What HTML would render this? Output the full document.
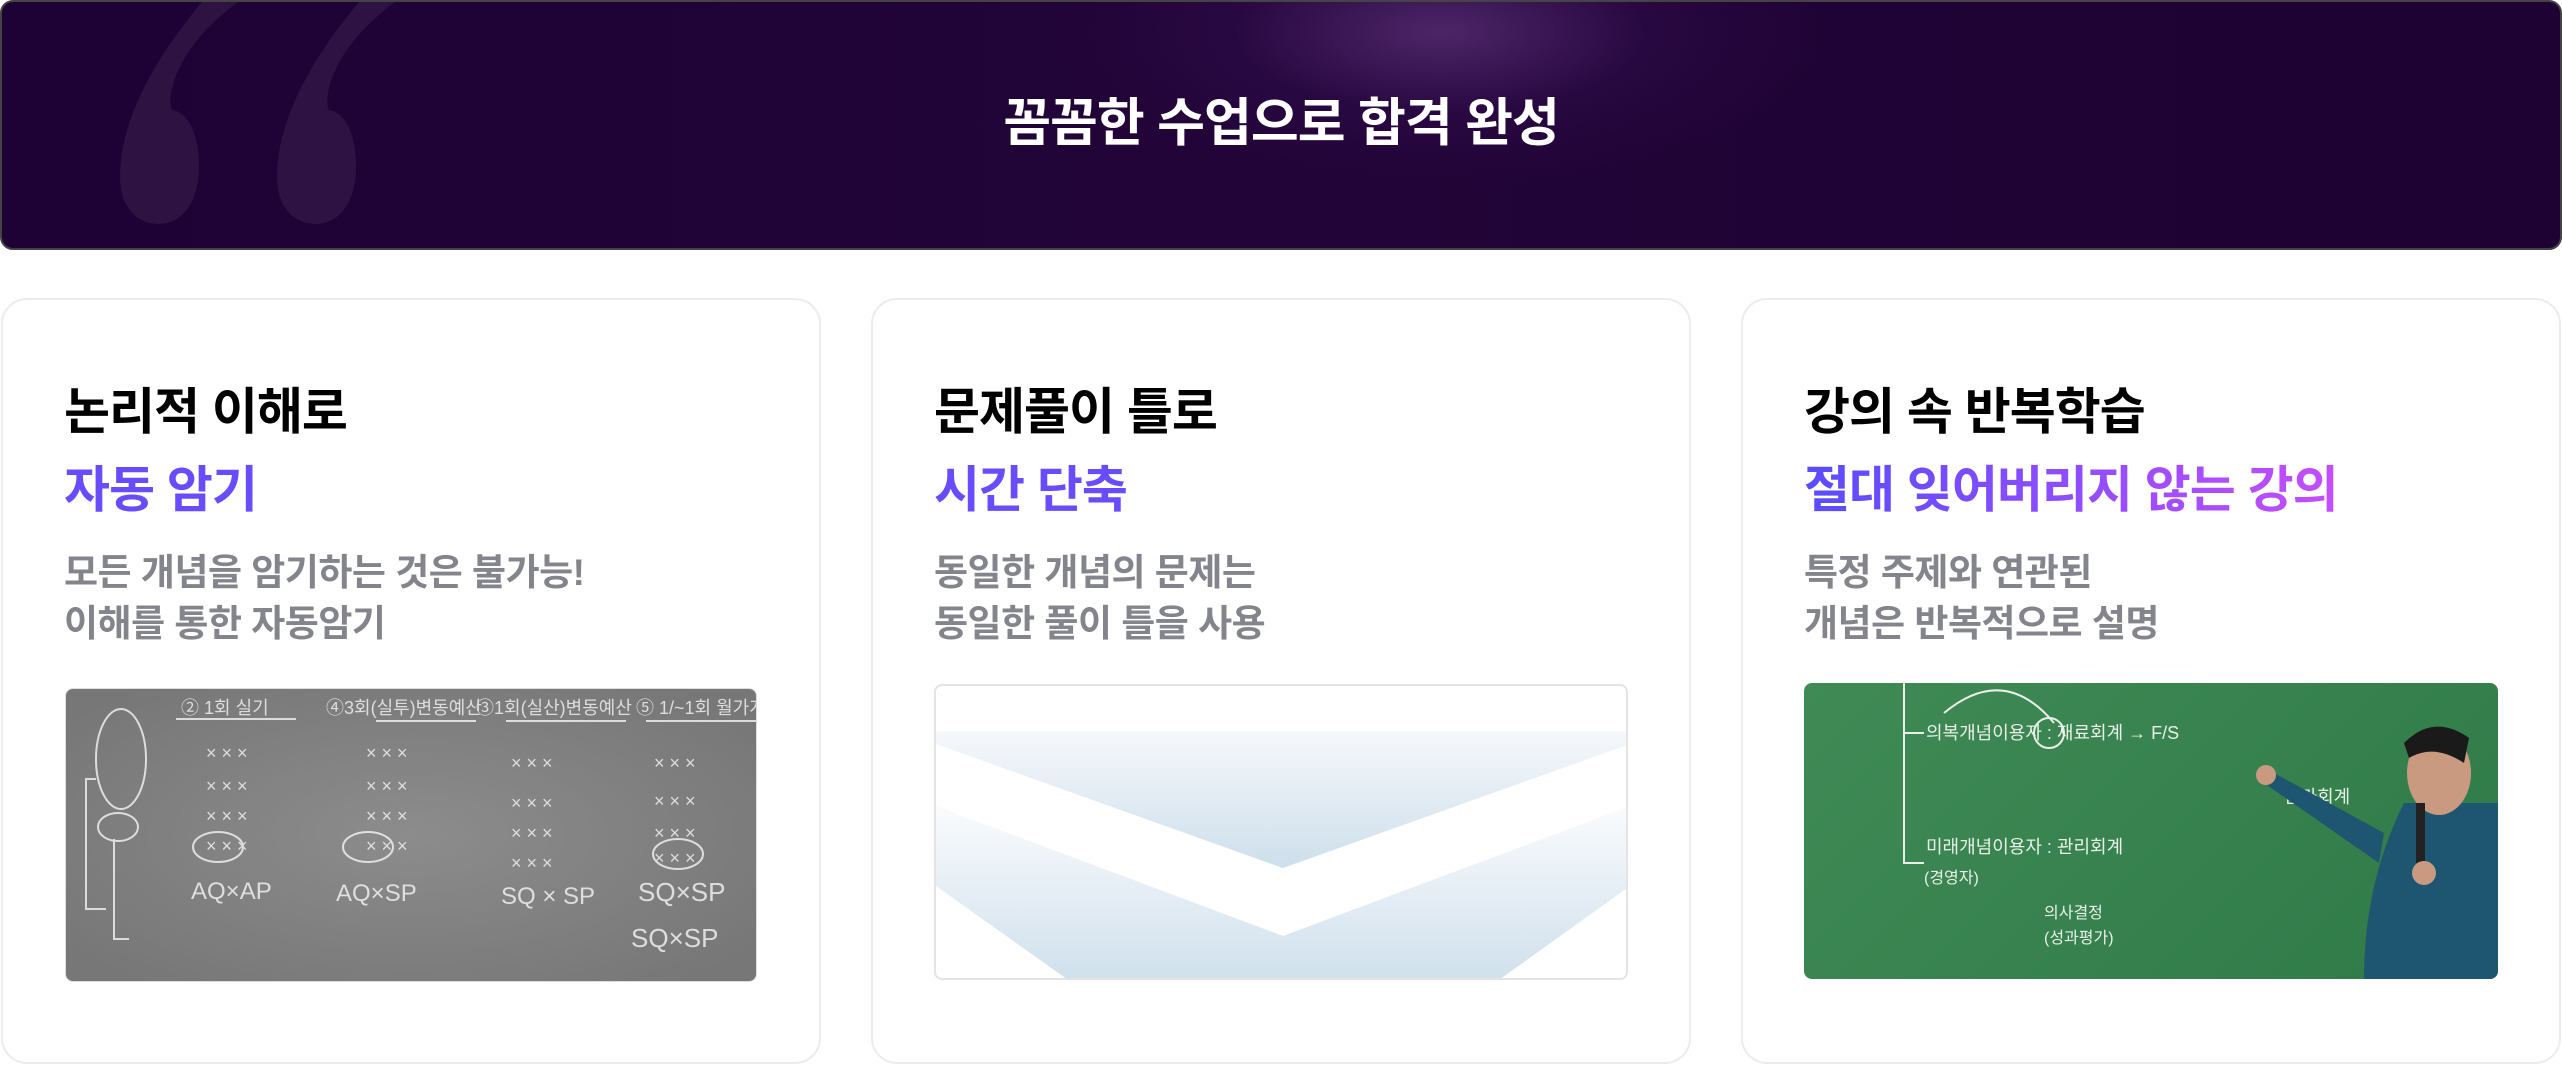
<!DOCTYPE html>
<html><head><meta charset="utf-8"><style>
*{margin:0;padding:0;box-sizing:border-box}
body{width:2562px;height:1066px;background:#fff;position:relative;overflow:hidden;font-family:"Liberation Sans","Noto Sans CJK KR",sans-serif}
.banner{position:absolute;left:0;top:0;width:2562px;height:250px;border-radius:13px;border:2px solid #444;
background:radial-gradient(ellipse 380px 150px at 1440px 30px,rgba(100,55,130,.65),rgba(60,20,90,.25) 55%,rgba(0,0,0,0) 100%),linear-gradient(90deg,#1e0235 0%,#220438 50%,#1e0233 100%);overflow:hidden}
.banner h1{position:absolute;left:0;right:0;top:90px;text-align:center;color:#fff;font-size:52px;font-weight:700;line-height:64px;letter-spacing:-1px}
.card{position:absolute;top:298px;width:820px;height:766px;border:2px solid #ececef;border-radius:26px;background:#fff}
.h{position:absolute;font-size:50px;font-weight:700;color:#000;line-height:64px;letter-spacing:-1px;white-space:nowrap}
.p{position:absolute;font-size:50px;font-weight:700;line-height:64px;letter-spacing:-1px;white-space:nowrap;color:#6a4cff}
.g{position:absolute;font-size:37px;font-weight:700;color:#84858c;line-height:63px;letter-spacing:-.5px;white-space:nowrap}
.img{position:absolute;border-radius:8px;overflow:hidden}
</style></head><body>
<div class="banner">
<svg width="2562" height="250" style="position:absolute;left:0;top:0">
<g fill="rgba(255,255,255,0.065)">
<path d="M200 0 C150 60 118 120 118 175 C118 205 135 222 157 222 C180 222 197 200 197 165 C197 130 185 110 170 108 C165 100 168 50 236 0 Z"/>
<path d="M200 0 C150 60 118 120 118 175 C118 205 135 222 157 222 C180 222 197 200 197 165 C197 130 185 110 170 108 C165 100 168 50 236 0 Z" transform="translate(157,0)"/>
</g></svg>
<h1>꼼꼼한 수업으로 합격 완성</h1>
</div>

<div class="card" style="left:1px"></div>
<div class="card" style="left:871px"></div>
<div class="card" style="left:1741px"></div>

<div class="h" style="left:64px;top:380px">논리적 이해로</div>
<div class="p" style="left:64px;top:458px">자동 암기</div>
<div class="g" style="left:64px;top:541px">모든 개념을 암기하는 것은 불가능!</div>
<div class="g" style="left:64px;top:592px">이해를 통한 자동암기</div>
<div class="img" style="left:65px;top:688px;width:692px;height:294px;background:radial-gradient(ellipse at 50% 50%,#8c8c8c,#777 90%);border:1px solid #ddd">
<svg width="692" height="294" fill="none" stroke="#eee" stroke-width="2" opacity=".85">
<ellipse cx="55" cy="70" rx="25" ry="50"/><ellipse cx="52" cy="138" rx="20" ry="14"/>
<path d="M110 30h120M310 32h100M440 32h120M580 32h120"/>
<text x="115" y="25" fill="#eee" stroke="none" font-size="18">② 1회 실기</text>
<text x="260" y="25" fill="#eee" stroke="none" font-size="18">④3회(실투)변동예산</text>
<text x="410" y="25" fill="#eee" stroke="none" font-size="18">③1회(실산)변동예산</text>
<text x="570" y="25" fill="#eee" stroke="none" font-size="18">⑤ 1/~1회 월가계산</text>
<g fill="#eee" stroke="none" font-size="18">
<text x="140" y="70">× × ×</text><text x="140" y="103">× × ×</text><text x="140" y="133">× × ×</text><text x="140" y="163">× × ×</text>
<text x="300" y="70">× × ×</text><text x="300" y="103">× × ×</text><text x="300" y="133">× × ×</text><text x="300" y="163">× × ×</text>
<text x="445" y="80">× × ×</text><text x="445" y="120">× × ×</text><text x="445" y="150">× × ×</text><text x="445" y="180">× × ×</text>
<text x="588" y="80">× × ×</text><text x="588" y="118">× × ×</text><text x="588" y="150">× × ×</text><text x="588" y="175">× × ×</text>
<text x="125" y="210" font-size="24">AQ×AP</text><text x="270" y="212" font-size="24">AQ×SP</text>
<text x="435" y="215" font-size="24">SQ × SP</text><text x="572" y="212" font-size="26">SQ×SP</text><text x="565" y="258" font-size="26">SQ×SP</text>
</g>
<ellipse cx="152" cy="158" rx="25" ry="15"/><ellipse cx="302" cy="158" rx="25" ry="15"/><ellipse cx="612" cy="165" rx="25" ry="15"/>
<path d="M48 150v100h15M30 90h-10v130h20"/>
</svg></div>

<div class="h" style="left:934px;top:380px">문제풀이 틀로</div>
<div class="p" style="left:934px;top:458px">시간 단축</div>
<div class="g" style="left:934px;top:541px">동일한 개념의 문제는</div>
<div class="g" style="left:934px;top:592px">동일한 풀이 틀을 사용</div>
<div class="img" style="left:934px;top:684px;width:694px;height:296px;background:#fff;border:2px solid #e4e4e6">
<svg width="694" height="296">
<defs>
<linearGradient id="a" x1="0" y1="0" x2="0" y2="1"><stop offset="0" stop-color="#f6f8fb"/><stop offset="1" stop-color="#cddfeb"/></linearGradient>
<linearGradient id="b" x1="0" y1="0" x2="0" y2="1"><stop offset="0" stop-color="#fafbfd"/><stop offset="1" stop-color="#cfe0ec"/></linearGradient>
</defs>
<polygon points="0,45 694,45 694,58 347,182 0,58" fill="url(#a)"/>
<polygon points="0,120 347,250 694,120 694,200 560,296 135,296 0,200" fill="url(#b)"/>
<polygon points="0,200 347,270 694,200 694,205 347,272 0,205" fill="#cfe0ec" opacity="0"/>
</svg></div>

<div class="h" style="left:1804px;top:380px">강의 속 반복학습</div>
<div class="p" style="left:1804px;top:458px;background:linear-gradient(90deg,#5a4cff,#c44eff);-webkit-background-clip:text;background-clip:text;color:transparent">절대 잊어버리지 않는 강의</div>
<div class="g" style="left:1804px;top:541px">특정 주제와 연관된</div>
<div class="g" style="left:1804px;top:592px">개념은 반복적으로 설명</div>
<div class="img" style="left:1804px;top:683px;width:694px;height:296px;background:linear-gradient(135deg,#3f8a55,#2f7a48)">
<svg width="694" height="296" fill="none" stroke="#e8f0e8" stroke-width="2">
<path d="M100 0v180h20M100 50h20"/>
<text x="122" y="56" fill="#e8f0e8" stroke="none" font-size="18">의복개념이용자 : 재료회계 → F/S</text>
<text x="122" y="170" fill="#e8f0e8" stroke="none" font-size="18">미래개념이용자 : 관리회계</text>
<text x="120" y="200" fill="#e8f0e8" stroke="none" font-size="16">(경영자)</text>
<text x="240" y="235" fill="#e8f0e8" stroke="none" font-size="16">의사결정</text>
<text x="240" y="260" fill="#e8f0e8" stroke="none" font-size="16">(성과평가)</text>
<path d="M140 30 Q200 -20 250 40"/><circle cx="245" cy="50" r="15"/>
<text x="480" y="120" fill="#e8f0e8" stroke="none" font-size="18">원가회계</text>
<g stroke="none">
<path d="M600 120 L694 120 L694 296 L560 296 Q560 200 600 120Z" fill="#1e5570"/>
<ellipse cx="635" cy="90" rx="32" ry="42" fill="#c99a80"/>
<path d="M600 60 Q630 30 665 55 L660 80 Q630 60 605 75Z" fill="#1a1a1a"/>
<path d="M580 150 L470 90 L460 100 L575 180Z" fill="#1e5570"/>
<circle cx="462" cy="92" r="10" fill="#c99a80"/>
<rect x="612" y="120" width="9" height="60" fill="#222"/>
<circle cx="620" cy="190" r="12" fill="#c99a80"/>
</g>
</svg></div>
</body></html>
